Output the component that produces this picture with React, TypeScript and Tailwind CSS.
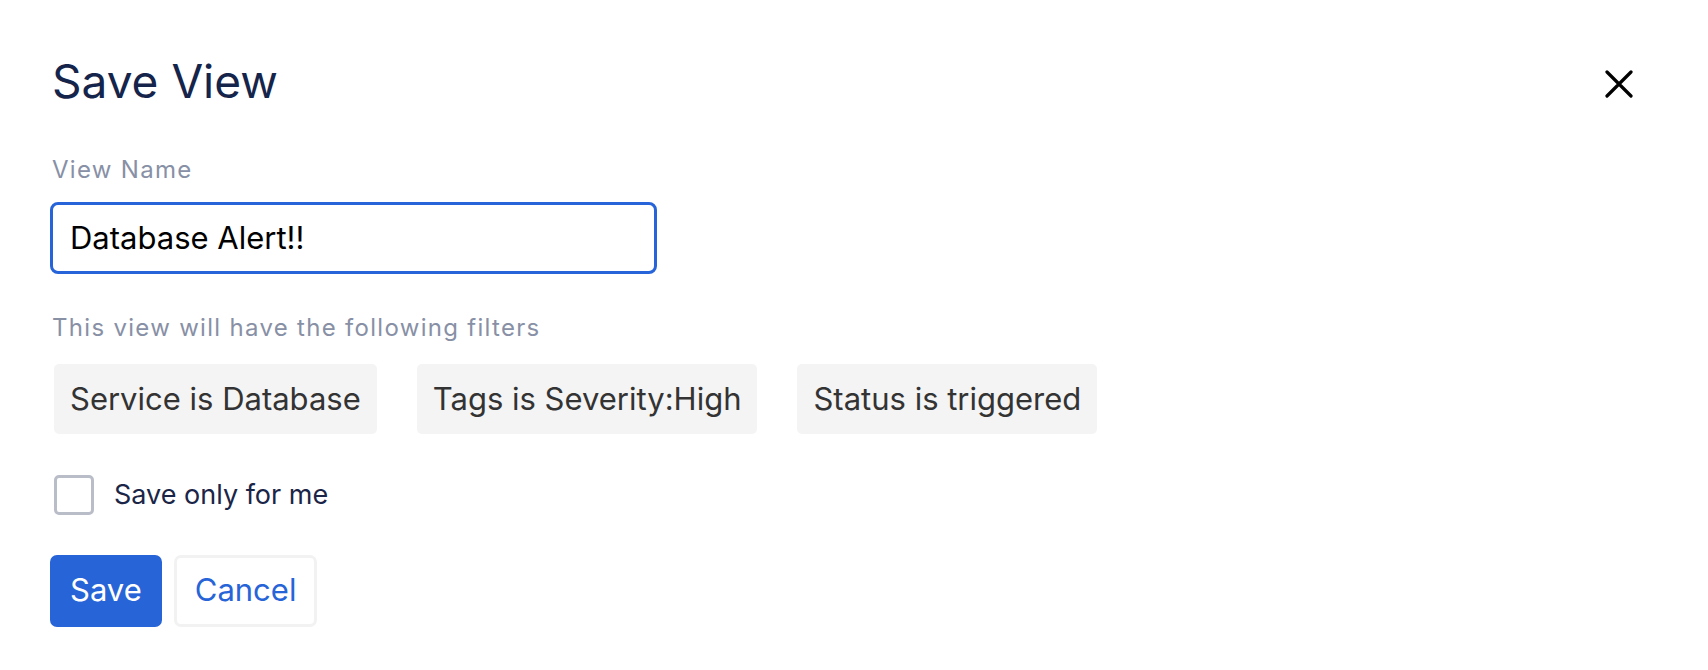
import React from "react";

export default function App() {
  const filters = ["Service is Database", "Tags is Severity:High", "Status is triggered"];
  return (
    <div className="w-[1708px] h-[670px] bg-white font-['Inter',sans-serif] overflow-hidden">
      <div className="pl-[52px] pr-[74px] pt-[54px]">
        <div className="flex items-start justify-between">
          <h1 className="text-[46px] leading-[54px] text-[#15244a] font-normal">Save View</h1>
          <button className="mt-[15px] w-[30px] h-[30px] flex items-center justify-center text-black">
            <svg width="28" height="28" viewBox="0 0 28 28" fill="none" stroke="currentColor" strokeWidth="3.2" strokeLinecap="round">
              <path d="M2 2L26 26M26 2L2 26" />
            </svg>
          </button>
        </div>
        <div className="mt-[48px] text-[24px] leading-[28px] tracking-[1.3px] text-[#8890a6]">View Name</div>
        <div className="mt-[18px] w-[607px] h-[72px] -ml-[2px] border-[3px] border-[#2764d9] rounded-[8px] flex items-center px-[17px]">
          <span className="text-[31px] text-black">Database Alert!!</span>
        </div>
        <div className="mt-[39px] text-[24px] leading-[30px] tracking-[1.3px] text-[#8890a6]">This view will have the following filters</div>
        <div className="mt-[21px] flex gap-[40px] ml-[2px]">
          {filters.map((f) => (
            <div key={f} className="h-[70px] px-[16px] flex items-center bg-[#f4f4f4] rounded-[5px] text-[31px] text-[#333333]">
              {f}
            </div>
          ))}
        </div>
        <div className="mt-[41px] flex items-center gap-[20px] ml-[2px]">
          <div className="w-[40px] h-[40px] border-[3px] border-[#b9bdc8] rounded-[5px] bg-white" />
          <span className="text-[27px] text-[#1a2547]">Save only for me</span>
        </div>
        <div className="mt-[39px] flex gap-[12px] -ml-[2px]">
          <button className="h-[72px] px-[20px] bg-[#2764d8] rounded-[7px] text-white text-[31px]">Save</button>
          <button className="h-[72px] px-[18px] border-[3px] border-[#f2f2f2] rounded-[7px] text-[#2764d8] text-[31px] bg-white">Cancel</button>
        </div>
      </div>
    </div>
  );
}
